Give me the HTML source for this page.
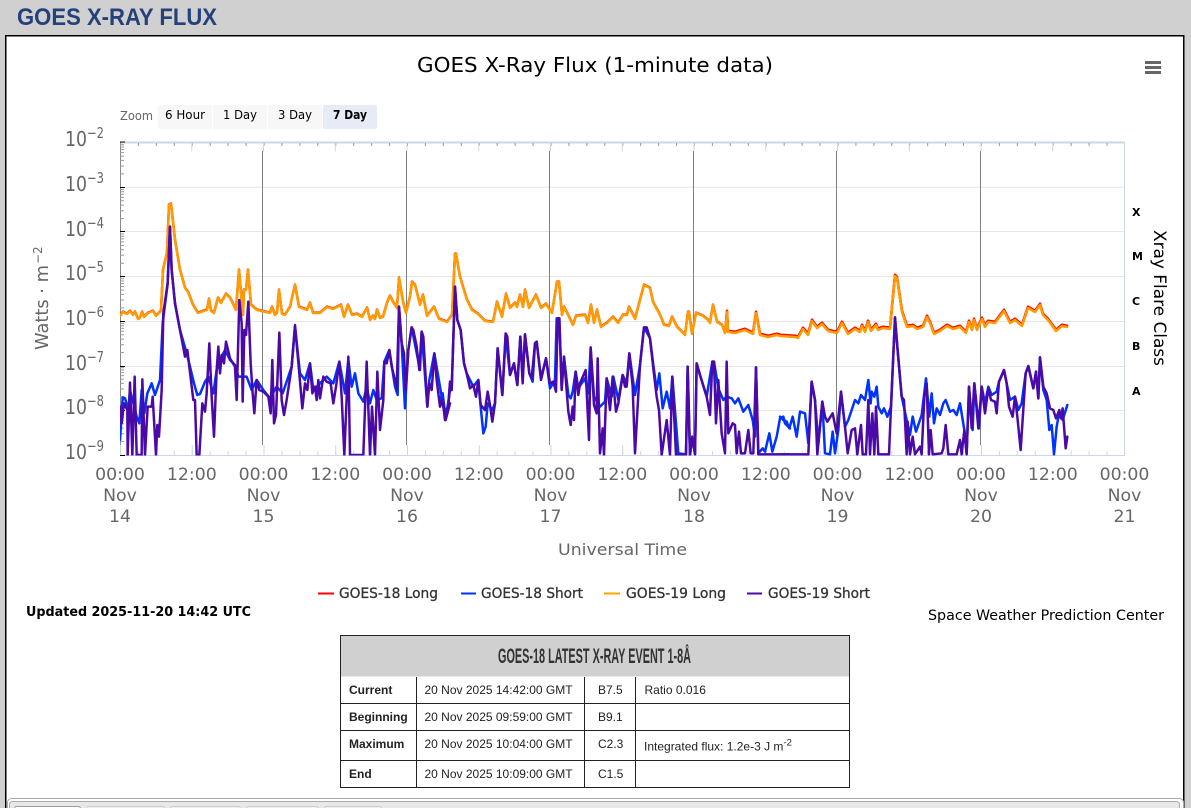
<!DOCTYPE html>
<html><head><meta charset="utf-8"><title>GOES X-Ray Flux</title>
<style>
html,body{margin:0;padding:0;background:#d0d0d0;width:1191px;height:808px;overflow:hidden}
svg{display:block}
.d{font-family:"DejaVu Sans",sans-serif}
.a{font-family:"Liberation Sans",Arial,sans-serif}
.x{font-size:17.3px;fill:#666;text-anchor:middle}
.y{font-size:20px;fill:#666}
.e{font-size:15px;fill:#666}
.t{font-size:12px;fill:#222}
.b{font-weight:bold}
.f{font-size:11px;font-weight:bold;fill:#000}
.l{font-size:14px;fill:#333;stroke:#333;stroke-width:.3px}
.z{font-size:12px;fill:#000}
polyline{fill:none;stroke-linejoin:round;stroke-linecap:round}
</style></head><body>
<svg width="1191" height="808" viewBox="0 0 1191 808" xmlns="http://www.w3.org/2000/svg">
<defs>
<path id="lg" d="M120 -13.4h4M120 -21.3h4M120 -26.9h4M120 -31.2h4M120 -34.7h4M120 -37.7h4M120 -40.3h4M120 -42.6h4" stroke="#999" stroke-width="1" fill="none"/>
<clipPath id="cp"><rect x="120" y="142" width="1005" height="313.5"/></clipPath>
<polyline id="lng" points="120,316 123,312 127,314 130,311 133,315 135,312 138,319 140,318 142,312 144,317 148,313 153,311 156,316 161,311 163,270 167,253 169,205 171,204 175,240 180,270 185,288 188,292 193,305 198,313 207,310 209,299 211,311 214,313 218,298 221,303 226,294 230,298 236,310 239,270 243,315 244,290 246,290 248,270 251,305 257,310 270,313 272,307 275,315 277,313 279,290 282,314 285,315 290,307 295,285 299,307 307,310 310,303 313,313 320,313 327,307 333,309 341,305 344,317 348,305 352,315 357,314 362,317 367,308 370,320 373,316 375,319 377,310 380,318 383,317 387,303 390,296 393,302 397,308 399,278 403,302 406,313 410,297 412,282 415,285 420,305 423,295 427,316 434,307 439,319 447,322 452,315 455,254 456,254 460,277 467,300 472,310 478,314 485,321 493,322 497,302 502,317 506,294 510,308 515,303 517,307 520,295 523,307 525,290 529,308 536,295 541,308 546,304 552,313 557,282 559,282 562,315 564,307 573,325 576,316 585,315 588,323 591,305 594,323 597,310 601,327 607,323 613,317 618,323 623,315 627,315 629,307 635,319 644,285 650,288 653,302 660,315 664,325 669,326 672,317 677,327 685,335 688,312 689,312 692,334 696,313 703,316 708,320 710,323 713,305 717,322 722,325 725,333 727,312 728,332 735,333 745,330 753,334 756,313 760,335 768,337 777,335 780,336 795,337 798,338 803,329 808,335 812,321 817,328 822,324 828,331 837,333 842,323 848,334 855,329 860,332 862,326 865,332 868,322 871,331 876,325 878,330 883,328 890,329 895,276 897,278 902,312 907,327 913,326 917,329 923,327 927,317 930,323 934,334 940,331 947,326 953,329 960,327 966,333 969,322 972,330 974,320 977,330 982,319 985,327 988,322 995,323 1004,311 1010,323 1015,320 1022,326 1028,308 1035,312 1040,305 1043,315 1048,320 1056,331 1062,326 1067,327"/>
<clipPath id="rc"><rect x="725" y="142" width="345" height="313"/></clipPath>
</defs>
<rect width="1191" height="808" fill="#d0d0d0"/>
<text class="a b" x="17" y="25" font-size="24" fill="#24417a" textLength="200" lengthAdjust="spacingAndGlyphs">GOES X-RAY FLUX</text>
<rect x="5.750" y="35.750" width="1178" height="780" fill="#fff" stroke="#000" stroke-width="1.500"/>

<text class="d" x="417" y="72" font-size="20" fill="#000" textLength="356" lengthAdjust="spacingAndGlyphs">GOES X-Ray Flux (1-minute data)</text>
<path d="M1145 62.500h16M1145 67.500h16M1145 72.500h16" stroke="#666" stroke-width="3"/>

<text class="d" x="120" y="120" font-size="12" fill="#666" textLength="33" lengthAdjust="spacingAndGlyphs">Zoom</text>
<rect x="158" y="105" width="54" height="24" rx="2" fill="#f7f7f7"/>
<rect x="213" y="105" width="54" height="24" rx="2" fill="#f7f7f7"/>
<rect x="268" y="105" width="54" height="24" rx="2" fill="#f7f7f7"/>
<rect x="323" y="105" width="54" height="24" rx="2" fill="#e6ebf5"/>
<text class="d z" x="165" y="119" textLength="40" lengthAdjust="spacingAndGlyphs">6 Hour</text>
<text class="d z" x="223" y="119" textLength="34" lengthAdjust="spacingAndGlyphs">1 Day</text>
<text class="d z" x="278" y="119" textLength="34" lengthAdjust="spacingAndGlyphs">3 Day</text>
<text class="d z b" x="333" y="119" textLength="34" lengthAdjust="spacingAndGlyphs">7 Day</text>

<!-- grid -->
<path d="M120 187.300H1124M120 231.500H1124M120 276.500H1124M120 321.500H1124M120 366.500H1124M120 410.500H1124" stroke="#e6e6e6" stroke-width="1"/>
<!-- plot frame -->
<path d="M120 142.500H1125" stroke="#ccd6eb" stroke-width="2"/>
<path d="M120 455.500H1125" stroke="#ccd6eb" stroke-width="1"/>
<path d="M1124.500 142V456" stroke="#ccd6eb" stroke-width="1"/>
<path d="M120.500 142V456" stroke="#888" stroke-width="1"/>
<!-- minor x ticks -->
<line x1="120" x2="1125" y1="144.500" y2="144.500" stroke="#999" stroke-width="3" stroke-dasharray="1 16.937"/>
<line x1="120" x2="1125" y1="453" y2="453" stroke="#ccd6eb" stroke-width="4" stroke-dasharray="1 16.937"/>
<!-- 12h ticks -->
<line x1="191.250" x2="1125" y1="147" y2="147" stroke="#ccd6eb" stroke-width="9" stroke-dasharray="1 70.750"/>
<line x1="120" x2="1125" y1="450" y2="450" stroke="#ccd6eb" stroke-width="10" stroke-dasharray="1 70.750"/>
<!-- day lines -->
<path d="M262.500 151V445M406.500 151V445M549.500 151V445M693.500 151V445M836.500 151V445M980.500 151V445" stroke="#808080" stroke-width="1"/>
<!-- y ticks -->
<use href="#lg" y="187.300"/><use href="#lg" y="232"/><use href="#lg" y="276.600"/><use href="#lg" y="321.300"/><use href="#lg" y="366"/><use href="#lg" y="410.300"/><use href="#lg" y="455"/>
<path d="M120 142h5M120 187.500h5M120 231.500h5M120 276.500h5M120 321.500h5M120 366.500h5M120 410.500h5M120 455.500h5" stroke="#000" stroke-width="1"/>

<g clip-path="url(#cp)">
<!-- long series, red slightly above -->
<use href="#lng" stroke="#f00" stroke-width="2.500" y="-.4"/>
<g clip-path="url(#rc)"><use href="#lng" stroke="#f00" stroke-width="2.500" y="-1.300"/></g>
<use href="#lng" stroke="#ff9c00" stroke-width="2.500"/>
<!-- blue -->
<g transform="translate(100,190) scale(.33333)">
<polyline stroke="#0033ff" stroke-width="7.500" points="60,750 68,622 75,625 85,660 90,600 100,640 110,680 118,700 125,600 133,670 142,610 155,580 165,615 180,570 188,400 203,280 210,110 215,240 225,340 240,420 260,490 270,530 282,580 292,615 300,612 315,575 325,560 340,610 350,540 360,510 375,480 390,510 405,525 415,560 440,560 455,600 470,570 490,600 510,625 530,590 548,610 565,560 575,530 585,410 600,550 615,570 630,520 640,600 660,580 680,560 700,580 718,515 735,610 745,510 755,590 765,550 775,610 790,635 800,590 810,640 820,600 830,630 845,625 853,515 868,480 885,590 893,615 897,350 905,460 915,655 925,480 935,412 960,540 965,425 982,650 988,570 1003,490 1025,620 1037,690 1050,600"/>
</g>
<g transform="translate(440,240) scale(.33333)">
<polyline stroke="#0033ff" stroke-width="7.500" points="0,480 8,460 15,520 25,495 30,430 35,450 45,140 52,240 62,270 72,370 80,400 100,440 115,420 122,500 130,580 137,560 143,490 157,510 165,490 173,325 187,465 197,285 210,405 222,370 232,435 241,290 248,420 255,283 268,400 278,425 285,310 290,305 303,415 318,355 330,445 345,420 350,235 358,235 365,440 372,350 385,465 392,475 398,455 407,395 415,445 435,415 445,460 452,325 462,470 480,500 495,485 500,415 515,470 520,410 535,480 548,405 560,430 568,340 585,465 600,375 612,262 630,295 640,375 650,450 658,400 668,505 680,455 690,505 697,410 715,640 738,643 743,380 750,645 757,590 765,643 770,370 780,405 800,470 817,365 822,365 835,445 850,480 860,470 875,475 885,490 895,475 910,515 925,495 938,540 945,590 948,382 955,640 968,625 975,635 988,580 997,635 1010,590 1020,535 1030,530 1035,550 1050,565"/>
</g>
<g transform="translate(780,240) scale(.33333)">
<polyline stroke="#0033ff" stroke-width="7.500" points="0,530 10,540 20,545 28,565 38,530 50,590 60,515 75,520 85,610 95,425 105,480 115,610 127,485 135,640 150,643 158,575 165,640 175,570 183,455 195,560 205,540 225,480 235,490 243,465 255,480 265,420 272,490 275,455 283,470 290,440 295,500 305,520 312,505 322,530 333,500 345,232 352,320 365,470 380,540 390,585 398,530 408,575 425,525 438,415 448,530 455,460 462,550 470,505 480,525 490,490 497,480 510,515 520,510 530,525 540,490 553,570 560,640 567,440 578,570 583,430 597,565 605,440 615,490 625,440 635,465 650,455 657,425 672,390 690,480 705,470 715,510 725,490 737,400 745,378 760,445 768,395 775,475 780,352 790,450 800,480 808,570 815,555 822,643 830,560 838,515 848,540 862,495"/>
</g>
<!-- purple -->
<g transform="translate(100,190) scale(.33333)">
<polyline stroke="#4b0aa8" stroke-width="7.500" points="60,650 65,700 72,640 82,660 83,795 90,578 97,795 104,560 110,795 125,795 127,568 135,795 143,650 155,650 158,620 168,795 172,705 177,740 185,600 190,370 203,280 210,110 215,240 225,340 240,420 255,500 262,480 268,530 280,630 285,630 290,795 298,795 307,640 315,665 320,610 328,460 335,620 342,740 350,540 355,470 360,550 365,495 372,520 378,455 390,505 405,530 410,630 418,330 425,400 428,635 433,420 438,435 445,335 452,520 458,610 463,670 470,570 478,600 490,605 505,620 512,670 517,510 522,700 528,675 538,428 545,630 552,675 560,630 575,530 585,405 597,540 607,655 615,580 622,600 630,520 637,610 645,590 650,630 655,570 660,625 670,560 680,575 692,580 700,640 708,590 718,515 725,620 733,795 745,500 750,795 790,795 800,515 810,795 816,650 825,795 832,545 840,720 850,630 853,515 860,520 868,480 875,530 885,570 890,600 897,350 905,460 912,490 917,600 925,480 935,412 940,420 950,470 958,540 965,425 970,440 982,650 988,580 995,600 1003,490 1010,570 1020,650 1027,630 1037,690 1050,640"/>
</g>
<g transform="translate(440,240) scale(.33333)">
<polyline stroke="#4b0aa8" stroke-width="7.500" points="0,490 8,480 15,540 25,500 30,425 35,450 45,140 52,240 62,270 72,370 80,400 90,445 100,435 108,470 115,420 122,495 135,510 143,455 150,495 157,545 165,490 173,325 187,465 197,280 202,290 210,405 222,370 232,435 241,290 248,430 255,283 268,400 275,415 285,310 290,305 303,420 318,355 330,430 340,425 348,455 353,235 358,235 365,450 372,350 385,515 392,555 398,500 402,540 407,395 415,465 420,430 437,390 447,600 452,322 462,495 470,520 473,355 480,640 488,565 492,645 500,415 510,510 518,410 528,515 535,490 548,405 555,440 560,440 568,340 578,440 585,640 600,375 612,262 620,262 630,295 640,385 650,470 657,510 665,645 680,540 690,645 697,410 708,645 738,643 743,380 750,645 757,590 765,643 770,370 780,405 800,470 810,525 817,365 822,365 828,550 835,420 845,580 855,640 860,365 865,580 878,550 885,555 890,640 897,575 903,640 915,640 925,570 932,640 940,640 948,382 955,643 1050,643"/>
</g>
<g transform="translate(780,240) scale(.33333)">
<polyline stroke="#4b0aa8" stroke-width="7.500" points="0,643 85,643 95,425 105,480 112,643 120,560 127,485 135,530 142,545 158,520 170,580 183,455 195,560 203,640 215,570 225,565 232,643 243,555 248,643 258,643 265,480 270,643 277,520 283,643 288,500 295,643 327,643 333,500 345,232 352,320 365,470 372,480 380,643 383,545 390,643 398,590 405,643 420,620 425,643 433,470 440,430 447,643 452,570 458,643 485,640 490,625 497,555 505,643 530,643 540,600 545,643 553,570 560,643 567,440 575,565 583,430 595,565 605,440 615,520 625,445 633,480 645,485 650,520 657,425 672,390 680,430 687,500 698,530 705,470 712,530 722,630 737,400 745,378 760,445 768,395 775,475 780,352 790,440 800,460 810,505 820,510 828,535 838,510 843,535 848,505 857,625 862,590"/>
</g>
</g>

<!-- y labels -->
<g class="d">
<text class="y" x="65" y="146" textLength="22" lengthAdjust="spacingAndGlyphs">10</text><text class="e" x="87" y="138" textLength="17" lengthAdjust="spacingAndGlyphs">−2</text>
<text class="y" x="65" y="191" textLength="22" lengthAdjust="spacingAndGlyphs">10</text><text class="e" x="87" y="183" textLength="17" lengthAdjust="spacingAndGlyphs">−3</text>
<text class="y" x="65" y="236" textLength="22" lengthAdjust="spacingAndGlyphs">10</text><text class="e" x="87" y="228" textLength="17" lengthAdjust="spacingAndGlyphs">−4</text>
<text class="y" x="65" y="280" textLength="22" lengthAdjust="spacingAndGlyphs">10</text><text class="e" x="87" y="272" textLength="17" lengthAdjust="spacingAndGlyphs">−5</text>
<text class="y" x="65" y="325" textLength="22" lengthAdjust="spacingAndGlyphs">10</text><text class="e" x="87" y="317" textLength="17" lengthAdjust="spacingAndGlyphs">−6</text>
<text class="y" x="65" y="370" textLength="22" lengthAdjust="spacingAndGlyphs">10</text><text class="e" x="87" y="362" textLength="17" lengthAdjust="spacingAndGlyphs">−7</text>
<text class="y" x="65" y="414" textLength="22" lengthAdjust="spacingAndGlyphs">10</text><text class="e" x="87" y="406" textLength="17" lengthAdjust="spacingAndGlyphs">−8</text>
<text class="y" x="65" y="459" textLength="22" lengthAdjust="spacingAndGlyphs">10</text><text class="e" x="87" y="451" textLength="17" lengthAdjust="spacingAndGlyphs">−9</text>
</g>
<text class="d" transform="translate(48,350) rotate(-90)" font-size="18" fill="#666" textLength="85" lengthAdjust="spacingAndGlyphs">Watts · m</text>
<text class="d" transform="translate(42,264) rotate(-90)" font-size="12" fill="#666">−2</text>

<!-- x labels -->
<g class="d">
<text class="x" x="120" y="480">00:00</text><text class="x" x="191.800" y="480">12:00</text>
<text class="x" x="263.500" y="480">00:00</text><text class="x" x="335.300" y="480">12:00</text>
<text class="x" x="407" y="480">00:00</text><text class="x" x="478.800" y="480">12:00</text>
<text class="x" x="550.500" y="480">00:00</text><text class="x" x="622.300" y="480">12:00</text>
<text class="x" x="694" y="480">00:00</text><text class="x" x="765.800" y="480">12:00</text>
<text class="x" x="837.500" y="480">00:00</text><text class="x" x="909.300" y="480">12:00</text>
<text class="x" x="981" y="480">00:00</text><text class="x" x="1052.800" y="480">12:00</text>
<text class="x" x="1124.500" y="480">00:00</text>
<text class="x" x="120" y="501">Nov</text><text class="x" x="120" y="522">14</text>
<text class="x" x="263.500" y="501">Nov</text><text class="x" x="263.500" y="522">15</text>
<text class="x" x="407" y="501">Nov</text><text class="x" x="407" y="522">16</text>
<text class="x" x="550.500" y="501">Nov</text><text class="x" x="550.500" y="522">17</text>
<text class="x" x="694" y="501">Nov</text><text class="x" x="694" y="522">18</text>
<text class="x" x="837.500" y="501">Nov</text><text class="x" x="837.500" y="522">19</text>
<text class="x" x="981" y="501">Nov</text><text class="x" x="981" y="522">20</text>
<text class="x" x="1124.500" y="501">Nov</text><text class="x" x="1124.500" y="522">21</text>
</g>
<text class="d" x="558" y="555" font-size="16" fill="#666" textLength="129" lengthAdjust="spacingAndGlyphs">Universal Time</text>

<!-- right axis -->
<g class="d">
<text class="f" x="1132" y="216">X</text>
<text class="f" x="1132" y="260">M</text>
<text class="f" x="1132" y="305">C</text>
<text class="f" x="1132" y="350">B</text>
<text class="f" x="1132" y="395">A</text>
</g>
<text class="d" transform="translate(1154,230) rotate(90)" font-size="17" fill="#000" textLength="136" lengthAdjust="spacingAndGlyphs">Xray Flare Class</text>

<!-- legend -->
<path d="M318 593.500h16" stroke="#f00" stroke-width="2"/>
<path d="M461 593.500h15" stroke="#0033ff" stroke-width="2"/>
<path d="M604 593.500h16" stroke="#ffa500" stroke-width="2"/>
<path d="M747 593.500h15" stroke="#4b0aa8" stroke-width="2"/>
<g class="d">
<text class="l" x="339" y="598" textLength="99" lengthAdjust="spacingAndGlyphs">GOES-18 Long</text>
<text class="l" x="481" y="598" textLength="102" lengthAdjust="spacingAndGlyphs">GOES-18 Short</text>
<text class="l" x="626" y="598" textLength="100" lengthAdjust="spacingAndGlyphs">GOES-19 Long</text>
<text class="l" x="768" y="598" textLength="102" lengthAdjust="spacingAndGlyphs">GOES-19 Short</text>
<text class="b" x="26" y="616" font-size="13.500" fill="#000" textLength="225" lengthAdjust="spacingAndGlyphs">Updated 2025-11-20 14:42 UTC</text>
<text x="928" y="620" font-size="14" fill="#000" textLength="236" lengthAdjust="spacingAndGlyphs">Space Weather Prediction Center</text>
</g>

<!-- table -->
<rect x="340.500" y="635.500" width="509" height="41" fill="#d0d0d0"/>
<path d="M340.500 635.500H849.500V787.500H340.500ZM340.500 635.500V677M849.500 635.500V677" fill="none" stroke="#222" stroke-width="1"/>
<path d="M340.500 703.500H849.500M340.500 730.500H849.500M340.500 760.500H849.500" stroke="#222" stroke-width="1"/>
<path d="M416.500 677V787M584.500 677V787M635.500 677V787" stroke="#222" stroke-width="1"/>
<text class="a b" x="498" y="663" font-size="21" fill="#333" textLength="193" lengthAdjust="spacingAndGlyphs">GOES-18 LATEST X-RAY EVENT 1-8Å</text>
<g class="a">
<text class="t b" x="349" y="694">Current</text>
<text class="t b" x="349" y="721">Beginning</text>
<text class="t b" x="349" y="748">Maximum</text>
<text class="t b" x="349" y="778">End</text>
<text class="t" x="424.500" y="694">20 Nov 2025 14:42:00 GMT</text>
<text class="t" x="424.500" y="721">20 Nov 2025 09:59:00 GMT</text>
<text class="t" x="424.500" y="748">20 Nov 2025 10:04:00 GMT</text>
<text class="t" x="424.500" y="778">20 Nov 2025 10:09:00 GMT</text>
<text class="t" x="598" y="694">B7.5</text>
<text class="t" x="598" y="721">B9.1</text>
<text class="t" x="598" y="748">C2.3</text>
<text class="t" x="598" y="778">C1.5</text>
<text class="t" x="644.500" y="694">Ratio 0.016</text>
<text class="t" x="644" y="750.500">Integrated flux: 1.2e-3 J m<tspan dy="-5" font-size="9.500">-2</tspan></text>
</g>

<!-- bottom tabs -->
<rect x="7.500" y="798.500" width="1176" height="20" rx="4" fill="#fff" stroke="#aaa" stroke-width="1"/>
<rect x="9.500" y="801.500" width="1170" height="16" rx="3" fill="#e8e8e8" stroke="#aaa" stroke-width="1"/>
<g fill="#f0f0f0" stroke="#ccc" stroke-width="1">
<rect x="14.500" y="806.500" width="66" height="10" rx="2" fill="#fff" stroke="#999"/>
<rect x="86.500" y="806.500" width="78" height="10" rx="2"/>
<rect x="170.500" y="806.500" width="70" height="10" rx="2"/>
<rect x="246.500" y="806.500" width="72" height="10" rx="2"/>
<rect x="324.500" y="806.500" width="57" height="10" rx="2"/>
</g>
</svg>
</body></html>
